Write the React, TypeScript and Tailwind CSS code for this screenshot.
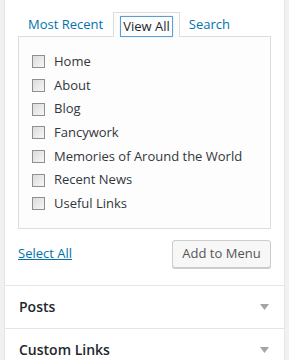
const pages = [
  "Home",
  "About",
  "Blog",
  "Fancywork",
  "Memories of Around the World",
  "Recent News",
  "Useful Links",
];

function Box() {
  return (
    <span className="block h-[13px] w-[13px] shrink-0 border border-[#8e8f8f] bg-gradient-to-br from-[#dcdcdc] to-[#f6f6f6]" />
  );
}

function Section({ title }: { title: string }) {
  return (
    <div className="flex h-[43px] items-center justify-between border-t border-[#e5e5e5] pl-[14px] pr-[15px]">
      <span className="text-[14px] font-semibold text-[#23282d]">{title}</span>
      <svg width="9" height="6" viewBox="0 0 9 6">
        <path d="M0 0h9L4.5 6z" fill="#a0a5aa" />
      </svg>
    </div>
  );
}

export default function App() {
  return (
    <div
      className="h-[360px] w-[289px] overflow-hidden bg-[#f1f1f1] px-1 text-[13px]"
      style={{ fontFamily: '"Open Sans", "Liberation Sans", sans-serif' }}
    >
      <div className="h-full border-x border-[#e5e5e5] bg-white">
        <div className="px-[13px] pt-[11px]">
          <div className="flex h-[25px] items-stretch text-[#0073aa]">
            <span className="flex items-center px-[10px] pt-[3px]">Most Recent</span>
            <span className="relative top-px z-10 flex items-center border border-b-0 border-[#dddddd] bg-[#fdfdfd] px-[7px] pt-[2px]">
              <span className="px-[2px] leading-[19px] text-[#23282d] outline outline-1 outline-[#5b9dd9] shadow-[0_0_2px_rgba(30,140,190,0.8)]">
                View All
              </span>
            </span>
            <span className="flex items-center px-[9px] pt-[3px]">Search</span>
          </div>
          <div className="border border-[#dddddd] bg-[#fdfdfd] pb-[12px] pl-[13px] pt-[13px]">
            {pages.map((p) => (
              <div key={p} className="flex h-[23.67px] items-center gap-[9px] text-[#32373c]">
                <Box />
                <span>{p}</span>
              </div>
            ))}
          </div>
          <div className="flex items-center justify-between pb-[17px] pt-[11px]">
            <span className="text-[#0073aa] underline">Select All</span>
            <span className="flex h-[28px] w-[99px] items-center justify-center rounded-[3px] border border-[#cccccc] bg-[#f7f7f7] text-[#555555] shadow-[0_1px_0_#cccccc]">
              Add to Menu
            </span>
          </div>
        </div>
        <Section title="Posts" />
        <Section title="Custom Links" />
      </div>
    </div>
  );
}
